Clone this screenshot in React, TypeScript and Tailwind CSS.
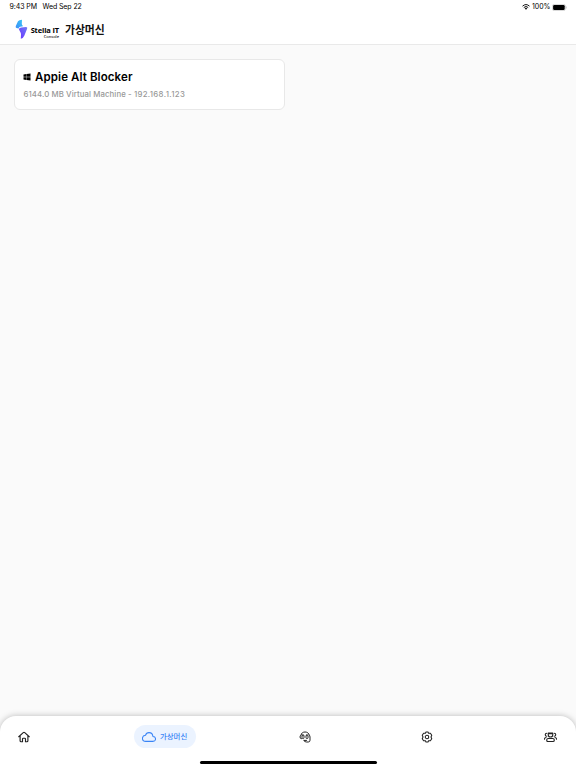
import { FaWindows } from "react-icons/fa";
import { IoCloudOutline } from "react-icons/io5";

function Logo() {
  return (
    <svg className="h-5 w-[13px] shrink-0" viewBox="0 0 13 20">
      <defs>
        <linearGradient id="upper" x1="1" y1="0" x2="0" y2="1">
          <stop offset="0" stopColor="#35c8f5" />
          <stop offset="1" stopColor="#3e8cf8" />
        </linearGradient>
        <linearGradient id="lower" x1="1" y1="0" x2="0" y2="1">
          <stop offset="0" stopColor="#6f7cf5" />
          <stop offset="1" stopColor="#6a32ff" />
        </linearGradient>
      </defs>
      <path d="M7 0.7L6.8 4.4Q6.8 5.6 7.6 6.6L8 7.2L5.2 7.8Q4 8.2 3.6 9.4L1.5 9Q0.2 8.5 0.8 7.1L3 2.2Q4 0.8 7 0.7Z" fill="url(#upper)" />
      <path d="M3.8 9.9Q4.6 8.7 6.4 8.5L11 8Q12.8 8.1 12.1 9.8L9.4 16.4Q8.3 19.2 5.8 19.7L6 15.5Q6.1 13.7 5 12.4Z" fill="url(#lower)" />
    </svg>
  );
}

function HomeIcon() {
  return (
    <svg className="h-3 w-3 shrink-0" viewBox="0 0 24 24" fill="none" stroke="#222" strokeWidth="2.3" strokeLinecap="round" strokeLinejoin="round">
      <path d="M1.5 11.5L10.5 3.2Q12 2 13.5 3.2L22.5 11.5M4.2 10V19.5Q4.2 21.5 6.2 21.5H9V16Q9 14.5 10.5 14.5H13.5Q15 14.5 15 16V21.5H17.8Q19.8 21.5 19.8 19.5V10" />
    </svg>
  );
}

function SupportIcon() {
  return (
    <svg className="ml-[103px] h-3 w-3 shrink-0" viewBox="0 0 24 24" fill="none" stroke="#222" strokeWidth="2" strokeLinecap="round" strokeLinejoin="round">
      <path d="M4 8C4.5 -0.3 19.5 -0.3 20.5 8M4 8Q2 9 2 12Q2 15.5 5 15.5M20.5 8Q22 9 22 12V18.5Q22 22 18.5 22H15Q12 22 10 19.5" />
      <rect x="6" y="8" width="4" height="7" rx="1.8" />
      <rect x="14" y="8" width="4" height="7" rx="1.8" />
      <path d="M10 18.8H15" />
    </svg>
  );
}

function SettingsIcon() {
  return (
    <svg className="ml-[110px] h-3 w-3 shrink-0" viewBox="0 0 24 24" fill="none" stroke="#222" strokeWidth="2.1" strokeLinejoin="round">
      <path d="M10 2H14L15.3 4.7L18.8 4.5L21.5 8.5L20 12L21.5 15.5L18.8 19.5L15.3 19.3L14 22H10L8.7 19.3L5.2 19.5L2.5 15.5L4 12L2.5 8.5L5.2 4.5L8.7 4.7Z" />
      <circle cx="12" cy="12" r="3.5" />
    </svg>
  );
}

function PeopleIcon() {
  return (
    <svg className="ml-[111px] h-3 w-[13px] shrink-0" viewBox="0 0 26 24" fill="none" stroke="#222" strokeWidth="2.2" strokeLinecap="round" strokeLinejoin="round">
      <path d="M8.5 4H17.5V8Q17.5 12 13 12Q8.5 12 8.5 8ZM8.5 5.5H17.5" />
      <path d="M5.5 19V17.5Q5.5 15 8.5 15H17.5Q20.5 15 20.5 17.5V19Q20.5 21 18 21H8Q5.5 21 5.5 19Z" />
      <path d="M5.5 4.5Q2.5 4.5 2.5 7.5Q2.5 10.5 5.5 10.5M20.5 4.5Q23.5 4.5 23.5 7.5Q23.5 10.5 20.5 10.5M4 13Q1 13 1 16.5M22 13Q25 13 25 16.5" />
    </svg>
  );
}

function StatusBar() {
  return (
    <div className="flex h-[14px] items-center pl-[9.5px] pr-[9px] text-[7px] leading-[14px] text-black">
      <span className="w-[33px] whitespace-nowrap tracking-[-0.08px]">9:43 PM</span>
      <span className="whitespace-nowrap tracking-[-0.1px]">Wed Sep 22</span>
      <svg className="ml-auto mr-[2px] h-[6px] w-2" viewBox="0 0 16 12">
        <path d="M1 4.3Q8 -2 15 4.3M3.6 7Q8 3 12.4 7" fill="none" stroke="#111" strokeWidth="2" />
        <path d="M5.4 8.8Q8 6.6 10.6 8.8L8 11.6Z" fill="#111" />
      </svg>
      <span>100%</span>
      <svg className="ml-[1.5px] h-[7px] w-[15px]" viewBox="0 0 15 7">
        <rect x="0.4" y="0.4" width="13" height="6.2" rx="1.8" fill="#fff" stroke="#aaa" strokeWidth="0.5" />
        <rect x="1.1" y="1" width="11.6" height="5" rx="1.2" fill="#000" />
        <path d="M14.2 2.5V4.5" stroke="#aaa" strokeWidth="0.7" />
      </svg>
    </div>
  );
}

export default function App() {
  return (
    <div className="flex h-[768px] w-[576px] flex-col overflow-hidden bg-[#fafafa] font-['Inter','Noto_Sans_CJK_KR',sans-serif]">
      <header className="h-[45px] shrink-0 border-b border-[#e9e9e9] bg-white">
        <StatusBar />
        <div className="flex h-[30px] items-center pl-[15px]">
          <Logo />
          <div className="ml-[2px] mt-[6px] flex w-[29px] flex-col items-end text-black">
            <span className="whitespace-nowrap font-['Open_Sans',sans-serif] text-[7.5px] font-bold leading-[9px] tracking-[-0.15px]">Stella IT</span>
            <span className="whitespace-nowrap font-['Noto_Sans',sans-serif] text-[4px] font-medium leading-[4px]">Console</span>
          </div>
          <h1 className="-mt-px ml-[6px] whitespace-nowrap font-['Noto_Sans_CJK_KR',sans-serif] text-[10.8px] font-bold leading-[16px] text-[#111]">가상머신</h1>
        </div>
      </header>

      <main className="flex-1 px-[14px] pt-[14px]">
        <section className="h-[51px] w-[271px] rounded-[6px] border border-[#e8e8e8] bg-white pl-[8px] pt-[9px]">
          <div className="flex h-4 items-center gap-1 text-black">
            <FaWindows className="h-2 w-2" />
            <h2 className="whitespace-nowrap text-[11.5px] font-semibold leading-4 tracking-[0.1px]">Appie Alt Blocker</h2>
          </div>
          <p className="mt-[4px] whitespace-nowrap pl-[0.5px] text-[7.8px] font-medium leading-[11px] tracking-[0.09px] text-[#989898]">
            6144.0 MB Virtual Machine - <span className="tracking-[0.32px]">192.168.1.123</span>
          </p>
        </section>
      </main>

      <nav className="flex h-[52px] shrink-0 flex-col rounded-t-[16px] bg-white shadow-[0_0_6px_rgba(0,0,0,0.26)]">
        <div className="flex h-[41px] shrink-0 items-center pl-[18px] text-[#222]">
          <HomeIcon />
          <div className="ml-[104px] flex h-[23px] w-[62px] items-center rounded-full bg-[#ebf3ff] pl-[8px] text-[#3984f6]">
            <IoCloudOutline className="h-[14px] w-[14px] shrink-0 [&_path]:[stroke-width:38px]" />
            <span className="-mt-0.5 ml-1 whitespace-nowrap font-['Noto_Sans_CJK_KR',sans-serif] text-[7.4px] font-medium leading-3">가상머신</span>
          </div>
          <SupportIcon />
          <SettingsIcon />
          <PeopleIcon />
        </div>
        <div className="mx-auto mt-[3.5px] h-[3px] w-[177px] rounded-full bg-black" />
      </nav>
    </div>
  );
}
